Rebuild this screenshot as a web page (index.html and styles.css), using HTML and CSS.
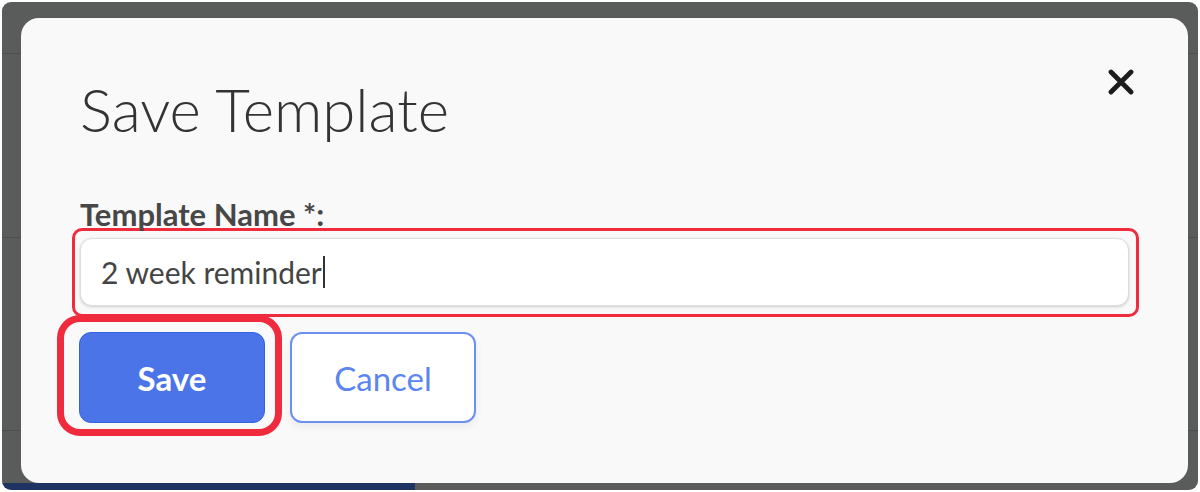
FILE: index.html
```html
<!DOCTYPE html>
<html lang="en">
<head>
  <meta charset="UTF-8" />
  <meta name="viewport" content="width=device-width, initial-scale=1.0"/>
  <title>Save Template</title>
  <link rel="stylesheet" href="styles.css">
</head>
<body>

<div class="backdrop">
  <div class="modal">
    <div class="modal-header">
      <h2 class="modal-title">Save Template</h2>
      <button class="close-btn" aria-label="Close">
        <svg width="26" height="26" viewBox="0 0 26 26">
          <path d="M3 3 L23 23 M23 3 L3 23" stroke="#1c1c1c" stroke-width="4.8" stroke-linecap="round" fill="none"/>
        </svg>
      </button>
    </div>

    <label class="field-label" for="templateName">Template Name *:</label>
    <div class="focus-ring input-ring">
      <div id="templateName" class="text-input"><span>2 week reminder</span><span class="caret"></span></div>
    </div>

    <div class="actions">
      <div class="focus-ring save-ring">
        <button class="btn btn-primary">Save</button>
      </div>
      <button class="btn btn-outline">Cancel</button>
    </div>
  </div>
</div>

</body>
</html>
```

FILE: styles.css
```css
body {
  margin: 0;
  padding: 2px;
  background: #fff;
  font-family: Lato, "Noto Sans", sans-serif;
}

.backdrop {
  display: flex;
  height: 488px;
  box-sizing: border-box;
  padding: 16px 10px 7px 19px;
  border-radius: 9px;
  background:
    linear-gradient(#1f3462, #1f3462) left bottom / 413px 7px no-repeat,
    linear-gradient(#4e5050, #4e5050) 0 51px / 100% 1px no-repeat,
    linear-gradient(#4e5050, #4e5050) 0 235px / 100% 1px no-repeat,
    linear-gradient(#4e5050, #4e5050) 0 428px / 100% 1px no-repeat,
    #5a5c5c;
}

.modal {
  flex: 1;
  background: #f9f9f9;
  border-radius: 18px;
  padding: 50px 49px 0 36px;
}

.modal-header {
  display: flex;
  justify-content: space-between;
  align-items: flex-start;
}

.modal-title {
  margin: 11px 0 0 23px;
  font-size: 60px;
  font-weight: 300;
  line-height: 60px;
  color: #333;
}

.close-btn {
  margin: 1px 5px 0 0;
  padding: 0;
  width: 26px;
  height: 26px;
  border: none;
  background: none;
  cursor: pointer;
}

.field-label {
  display: block;
  margin: 61px 0 0 23px;
  font-size: 31px;
  font-weight: 700;
  line-height: 28px;
  color: #474747;
}

.focus-ring {
  border: 3px solid #ef2b3d;
  border-radius: 10px;
}

.input-ring {
  margin-left: 15px;
  padding: 7px 7px 8px 5px;
}

.text-input {
  display: flex;
  align-items: center;
  height: 68px;
  box-sizing: border-box;
  padding: 0 20px;
  background: #fff;
  border: 1px solid #dedede;
  border-radius: 12px;
  box-shadow: 0 1px 3px rgba(0,0,0,0.18);
  font-size: 30px;
  color: #444;
}

.caret {
  display: inline-block;
  width: 2px;
  height: 32px;
  margin-left: 1px;
  background: #333;
}

.actions {
  display: flex;
  align-items: flex-start;
  margin-top: -2px;
}

.save-ring {
  border-width: 7px;
  border-radius: 23px;
  padding: 10px 10px 6px 15px;
}

.btn {
  width: 186px;
  height: 91px;
  border-radius: 12px;
  font-family: inherit;
  font-size: 33px;
  cursor: pointer;
}

.btn-primary {
  background: #4a74e8;
  color: #fff;
  border: 1px solid #3563de;
  font-weight: 700;
}

.btn-outline {
  margin: 17px 0 0 8px;
  background: #fff;
  color: #5b86f0;
  border: 2px solid #6b90f2;
  box-shadow: 0 4px 8px rgba(0,0,0,0.06);
}
```
